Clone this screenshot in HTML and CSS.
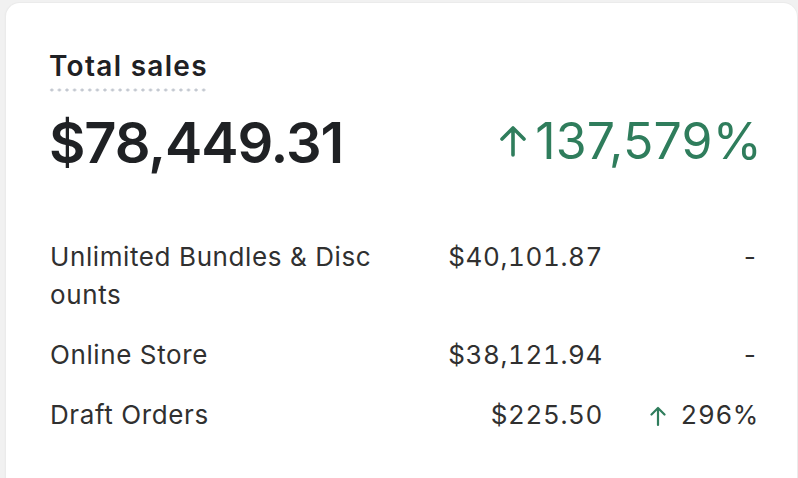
FILE: index.html
```html
<!DOCTYPE html>
<html lang="en">
<head>
<meta charset="utf-8">
<title>Total sales</title>
<link rel="stylesheet" href="styles.css">
</head>
<body>
<div class="card">
  <div class="title"><span class="title-text">Total sales</span></div>
  <div class="headline">
    <div class="total">$78,449.31</div>
    <div class="trend">
      <svg class="arrow-lg" viewBox="0 0 26 34" aria-hidden="true"><path d="M13 31V4M2 15L13 4L24 15"/></svg>
      <span>137,579%</span>
    </div>
  </div>
  <div class="rows">
    <div class="label">Unlimited Bundles &amp; Discounts</div>
    <div class="amount">$40,101.87</div>
    <div class="change">-</div>
    <div class="label">Online Store</div>
    <div class="amount">$38,121.94</div>
    <div class="change">-</div>
    <div class="label">Draft Orders</div>
    <div class="amount">$225.50</div>
    <div class="change"><svg class="arrow-sm" viewBox="0 0 16 22" aria-hidden="true"><path d="M8 20V3M1.5 9.5L8 3L14.5 9.5"/></svg><span>296%</span></div>
  </div>
</div>
</body>
</html>
```

FILE: styles.css
```css
html, body {
  margin: 0;
  padding: 0;
  background: #f1f1f1;
  height: 100%;
  overflow: hidden;
}
body {
  font-family: Inter, "Noto Sans", sans-serif;
  color: #303030;
}
.card {
  margin: 3px 1px 0 6px;
  height: 600px;
  background: #ffffff;
  border-radius: 14px 14px 0 0;
  box-shadow: 0 0 0 1px #ebebeb, -1px 0 2px rgba(0,0,0,0.04);
  padding: 45px 40px 0 43px;
  box-sizing: border-box;
}
.title {
  display: flex;
}
.title-text {
  font-size: 28px;
  font-weight: 600;
  line-height: 36px;
  color: #1f2124;
  letter-spacing: 1.3px;
  padding-bottom: 8px;
  background-image: radial-gradient(circle, #c3c8d0 1.4px, transparent 1.7px);
  background-size: 7.6px 4px;
  background-repeat: repeat-x;
  background-position: -1px bottom;
}
.headline {
  display: flex;
  justify-content: space-between;
  align-items: center;
  margin-top: 19px;
}
.total {
  font-size: 56px;
  font-weight: 600;
  line-height: 64px;
  color: #1f2124;
  letter-spacing: -1.1px;
}
.trend {
  display: flex;
  align-items: center;
  gap: 9px;
  font-size: 50px;
  font-weight: 400;
  line-height: 64px;
  color: #2f7d5c;
  letter-spacing: 0.2px;
  margin-top: -4px;
  margin-right: -5px;
}
.arrow-lg {
  width: 26px;
  height: 34px;
  fill: none;
  stroke: #2f7d5c;
  stroke-width: 3.6;
  stroke-linecap: round;
  stroke-linejoin: round;
}
.rows {
  display: grid;
  grid-template-columns: 330px 1fr 154px;
  row-gap: 22px;
  margin-top: 63px;
  font-size: 26px;
  line-height: 38px;
  letter-spacing: 0.6px;
  color: #303030;
}
.label {
  word-break: break-all;
  padding-left: 1px;
}
.amount {
  text-align: right;
  font-variant-numeric: tabular-nums;
  letter-spacing: 0.6px;
}
.change {
  display: flex;
  justify-content: flex-end;
  align-items: flex-start;
  gap: 14px;
  font-variant-numeric: tabular-nums;
  margin-right: -2px;
}
.arrow-sm {
  width: 16px;
  height: 22px;
  margin-top: 9px;
  fill: none;
  stroke: #2f7d5c;
  stroke-width: 2.2;
  stroke-linecap: round;
  stroke-linejoin: round;
}
```
